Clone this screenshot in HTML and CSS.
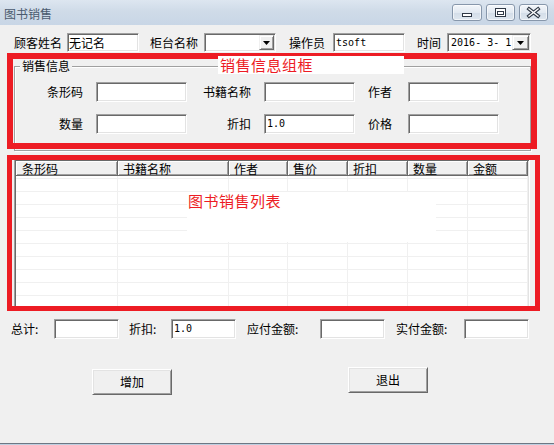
FILE: index.html
```html
<!DOCTYPE html>
<html lang="zh-CN">
<head>
<meta charset="utf-8">
<title>图书销售</title>
<link rel="stylesheet" href="styles.css">
</head>
<body>
<div class="window">
  <div class="titlebar">
    <span class="title">图书销售</span>
    <div class="caption-btns">
      <div class="cbtn cbtn-min">
        <svg width="28" height="15" viewBox="0 0 28 15"><rect x="9.5" y="8.5" width="9" height="3" fill="#fff" stroke="#2f3845"/></svg>
      </div>
      <div class="cbtn">
        <svg width="27" height="15" viewBox="0 0 27 15"><rect x="8.5" y="3.5" width="10" height="8" fill="#fff" stroke="#2f3845"/><rect x="10.5" y="6.5" width="6" height="3" fill="none" stroke="#2f3845"/></svg>
      </div>
      <div class="cbtn">
        <svg width="27" height="15" viewBox="0 0 27 15"><path d="M9 4 L18 11 M18 4 L9 11" stroke="#2f3845" stroke-width="3.6" stroke-linecap="square"/><path d="M9 4 L18 11 M18 4 L9 11" stroke="#fff" stroke-width="1.4" stroke-linecap="square"/></svg>
      </div>
    </div>
  </div>

  <div class="client">
    <div class="row1">
      <span class="lbl">顾客姓名</span>
      <div class="inp w72 ml5">无记名</div>
      <span class="lbl ml11">柜台名称</span>
      <div class="combo w72 ml6"><div class="dropbtn"><svg width="7" height="4" viewBox="0 0 7 4"><polygon points="0,0 7,0 3.5,4" fill="#000"/></svg></div></div>
      <span class="lbl ml13">操作员</span>
      <div class="inp mono w72 ml8">tsoft</div>
      <span class="lbl ml12">时间</span>
      <div class="combo date ml6"><span class="date-text">2016- 3- 1</span><div class="dropbtn dropbtn-date"><svg width="7" height="4" viewBox="0 0 7 4"><polygon points="0,0 7,0 3.5,4" fill="#000"/></svg></div></div>
    </div>

    <div class="group">
      <div class="legend">销售信息</div>
      <div class="group-grid">
        <span class="glbl pr13">条形码</span>
        <div class="inp gin"></div>
        <span class="glbl pr13">书籍名称</span>
        <div class="inp gin"></div>
        <span class="glbl pr16">作者</span>
        <div class="inp gin"></div>
        <span class="glbl pr13">数量</span>
        <div class="inp gin"></div>
        <span class="glbl pr13">折扣</span>
        <div class="inp gin mono">1.0</div>
        <span class="glbl pr16">价格</span>
        <div class="inp gin"></div>
      </div>
    </div>

    <div class="list">
      <div class="list-head">
        <div class="hcell c1">条形码</div>
        <div class="hcell c2">书籍名称</div>
        <div class="hcell c3">作者</div>
        <div class="hcell c4">售价</div>
        <div class="hcell c4">折扣</div>
        <div class="hcell c4">数量</div>
        <div class="hcell c4">金额</div>
      </div>
      <div class="list-body">
        <div class="bcol c1"></div>
        <div class="bcol c2"></div>
        <div class="bcol c3"></div>
        <div class="bcol c4"></div>
        <div class="bcol c4"></div>
        <div class="bcol c4"></div>
        <div class="bcol c4"></div>
      </div>
    </div>

    <div class="totals">
      <span class="tlbl">总计:</span>
      <div class="inp tin"></div>
      <span class="tlbl pl10">折扣:</span>
      <div class="inp tin mono">1.0</div>
      <span class="tlbl pl11">应付金额:</span>
      <div class="inp tin"></div>
      <span class="tlbl pl11">实付金额:</span>
      <div class="inp tin"></div>
    </div>

    <div class="actions">
      <button class="btn btn-add">增加</button>
      <button class="btn btn-exit">退出</button>
    </div>
  </div>

  <div class="annot annot1"></div>
  <div class="tag tag1">销售信息组框</div>
  <div class="annot annot2"></div>
  <div class="tag tag2">图书销售列表</div>
</div>
</body>
</html>
```

FILE: styles.css
```css
html, body {
  margin: 0;
  padding: 0;
  background: #f0f0f0;
}

.window {
  position: relative;
  width: 554px;
  height: 445px;
  box-sizing: border-box;
  display: flex;
  flex-direction: column;
  background: #f0f0f0;
  border-bottom: 1px solid #bfcfe0;
  font-family: "Noto Sans CJK SC", "Noto Sans", sans-serif;
  font-size: 12px;
  color: #000;
  overflow: hidden;
}

/* ---------- title bar ---------- */
.titlebar {
  height: 25px;
  flex: none;
  display: flex;
  align-items: flex-start;
  background: linear-gradient(#dde6f0, #cfdbe8 45%, #c8d6e6);
}

.title {
  margin: 6px 0 0 4px;
  line-height: 16px;
  font-size: 12px;
  color: #4a5a6e;
}

.caption-btns {
  margin: 4px 6px 0 auto;
  display: flex;
}

.cbtn {
  box-sizing: border-box;
  width: 29px;
  height: 17px;
  margin-left: 4px;
  border: 1px solid #8797ab;
  border-radius: 3px;
  background: linear-gradient(#f3f6fa, #e2e9f1 50%, #d3dde8 51%, #dfe7ef);
  box-shadow: inset 0 0 0 1px rgba(255,255,255,0.6);
  display: flex;
}

.cbtn-min {
  width: 30px;
  margin-left: 0;
}

.cbtn svg {
  display: block;
}

/* ---------- client ---------- */
.client {
  flex: 1;
  border-bottom: 1px solid #6d7784;
}

.row1 {
  margin-top: 8px;
  padding-left: 14px;
  height: 19px;
  display: flex;
  align-items: center;
}

.lbl {
  line-height: 19px;
  white-space: nowrap;
}

.ml5 { margin-left: 5px; }
.ml6 { margin-left: 6px; }
.ml8 { margin-left: 8px; }
.ml11 { margin-left: 11px; }
.ml12 { margin-left: 12px; }
.ml13 { margin-left: 13px; }
.w72 { width: 72px; }

.inp {
  box-sizing: border-box;
  height: 19px;
  background: #fff;
  border: 1px solid;
  border-color: #a0a0a0 #ffffff #ffffff #a0a0a0;
  box-shadow: inset 1px 1px 0 #696969, inset -1px -1px 0 #e3e3e3;
  padding-left: 1px;
  line-height: 17px;
  white-space: nowrap;
  overflow: hidden;
}

.mono {
  font-family: "DejaVu Sans Mono", "Liberation Mono", monospace;
  font-size: 10px;
  padding-left: 2px;
}

.combo {
  box-sizing: border-box;
  height: 19px;
  background: #fff;
  border: 1px solid;
  border-color: #a0a0a0 #ffffff #ffffff #a0a0a0;
  box-shadow: inset 1px 1px 0 #696969, inset -1px -1px 0 #e3e3e3;
  padding: 1px;
  display: flex;
  align-items: stretch;
  justify-content: flex-end;
}

.date {
  width: 84px;
  justify-content: space-between;
}

.date-text {
  font-family: "DejaVu Sans Mono", "Liberation Mono", monospace;
  font-size: 10px;
  line-height: 15px;
  padding-left: 2px;
  white-space: nowrap;
}

.dropbtn {
  box-sizing: border-box;
  width: 15px;
  background: #f0f0f0;
  border: 1px solid;
  border-color: #f0f0f0 #696969 #696969 #f0f0f0;
  box-shadow: inset 1px 1px 0 #ffffff, inset -1px -1px 0 #a0a0a0;
  display: flex;
  align-items: center;
  justify-content: center;
}

.dropbtn-date {
  width: 17px;
}

.dropbtn svg {
  display: block;
}

/* ---------- group box ---------- */
.group {
  box-sizing: border-box;
  margin: 14px 0 0 14px;
  width: 517px;
  height: 85px;
  border: 1px solid #a0a0a0;
  box-shadow: inset 1px 1px 0 #ffffff, 1px 1px 0 #ffffff;
}

.legend {
  width: fit-content;
  margin: -8px 0 0 5px;
  padding: 0 2px;
  line-height: 14px;
  background: #f0f0f0;
}

.group-grid {
  margin-top: 9px;
  display: grid;
  grid-template-columns: 81px 91px 77px 91px 53px 91px;
  grid-auto-rows: 20px;
  row-gap: 12px;
  align-items: center;
}

.glbl {
  text-align: right;
  line-height: 20px;
  white-space: nowrap;
}

.pr13 { padding-right: 13px; }
.pr16 { padding-right: 16px; }

.gin {
  height: 20px;
  line-height: 18px;
}

/* ---------- list view ---------- */
.list {
  box-sizing: border-box;
  margin: 8px 0 0 14px;
  width: 516px;
  height: 150px;
  border: 1px solid;
  border-color: #a0a0a0 #ffffff #ffffff #a0a0a0;
  box-shadow: inset 1px 1px 0 #696969, inset -1px -1px 0 #e3e3e3;
  padding: 1px;
  background: #fff;
  display: flex;
  flex-direction: column;
}

.list-head {
  height: 15px;
  display: flex;
  flex: none;
}

.hcell {
  box-sizing: border-box;
  height: 15px;
  background: #f0f0f0;
  border-right: 1px solid #696969;
  border-bottom: 1px solid #696969;
  box-shadow: inset 1px 1px 0 #ffffff, inset -1px -1px 0 #a0a0a0;
  padding-left: 5px;
  font-size: 12px;
  line-height: 15px;
  white-space: nowrap;
}

.c1 { width: 102px; }
.c2 { width: 111px; }
.c3 { width: 59px; }
.c4 { width: 60px; }

.list-head .c1 { padding-left: 6px; }

.list-body {
  flex: 1;
  display: flex;
  background-image: linear-gradient(#f0f0f0 0 1px, transparent 1px);
  background-size: 100% 13px;
  background-position: 0 2px;
}

.bcol {
  box-sizing: border-box;
  border-right: 1px solid #f0f0f0;
}

/* ---------- totals ---------- */
.totals {
  margin: 10px 0 0 11px;
  display: grid;
  grid-template-columns: 43px 65px 52px 65px 84px 65px 79px 65px;
  grid-auto-rows: 20px;
  align-items: center;
}

.tlbl {
  line-height: 20px;
  white-space: nowrap;
}

.pl10 { padding-left: 10px; }
.pl11 { padding-left: 11px; }

.tin {
  height: 20px;
  line-height: 17px;
}

/* ---------- buttons ---------- */
.actions {
  margin-top: 28px;
  display: flex;
  align-items: flex-start;
}

.btn {
  box-sizing: border-box;
  width: 80px;
  height: 26px;
  margin: 0;
  padding: 0;
  background: #f0f0f0;
  border: 1px solid;
  border-color: #ffffff #696969 #696969 #ffffff;
  box-shadow: inset 1px 1px 0 #e3e3e3, inset -1px -1px 0 #a0a0a0;
  font-family: "Noto Sans CJK SC", "Noto Sans", sans-serif;
  font-size: 12px;
  color: #000;
  line-height: 22px;
}

.btn-add {
  margin: 2px 0 0 92px;
}

.btn-exit {
  margin-left: 176px;
}

/* ---------- annotation overlays ---------- */
.annot {
  position: absolute;
  box-sizing: border-box;
  border: 6px solid #ed1c24;
}

.annot1 {
  left: 7px;
  top: 53px;
  width: 530px;
  height: 96px;
}

.annot2 {
  left: 7px;
  top: 155px;
  width: 533px;
  height: 156px;
  border-width: 5px;
}

.tag {
  position: absolute;
  background: #fff;
  color: #ed1c24;
  font-size: 15px;
  letter-spacing: 0.5px;
  white-space: nowrap;
}

.tag1 {
  left: 218px;
  top: 56px;
  width: 186px;
  height: 18px;
  line-height: 18px;
  padding-left: 2px;
  box-sizing: border-box;
}

.tag2 {
  left: 187px;
  top: 192px;
  width: 249px;
  height: 50px;
  line-height: 17px;
  padding-left: 1px;
  box-sizing: border-box;
}
```
